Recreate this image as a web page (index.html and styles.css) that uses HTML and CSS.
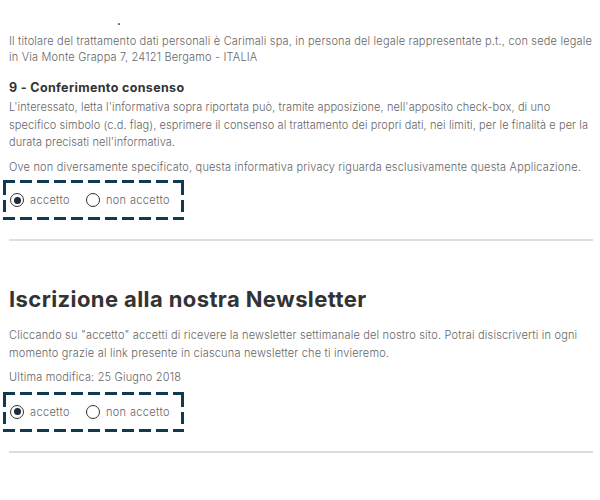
FILE: index.html
```html
<!DOCTYPE html>
<html lang="it">
<head>
<meta charset="utf-8">
<link rel="stylesheet" href="styles.css">
</head>
<body>
<div class="page">
  <div class="dot">.</div>
  <p class="txt first">Il titolare del trattamento dati personali è Carimali spa, in persona del legale rappresentate p.t., con sede legale in Via Monte Grappa 7, 24121 Bergamo - ITALIA</p>
  <h3 class="sub">9 - Conferimento consenso</h3>
  <p class="txt tight">L'interessato, letta l'informativa sopra riportata può, tramite apposizione, nell'apposito check-box, di uno specifico simbolo (c.d. flag), esprimere il consenso al trattamento dei propri dati, nei limiti, per le finalità e per la durata precisati nell'informativa.</p>
  <p class="txt">Ove non diversamente specificato, questa informativa privacy riguarda esclusivamente questa Applicazione.</p>
  <div class="choice">
    <label class="opt"><span class="radio on"></span>accetto</label>
    <label class="opt"><span class="radio"></span>non accetto</label>
  </div>
  <hr class="rule">
  <h2 class="title">Iscrizione alla nostra Newsletter</h2>
  <p class="txt intro">Cliccando su "accetto" accetti di ricevere la newsletter settimanale del nostro sito. Potrai disiscriverti in ogni momento grazie al link presente in ciascuna newsletter che ti invieremo.</p>
  <p class="txt">Ultima modifica: 25 Giugno 2018</p>
  <div class="choice second">
    <label class="opt"><span class="radio on"></span>accetto</label>
    <label class="opt"><span class="radio"></span>non accetto</label>
  </div>
  <hr class="rule">
</div>
</body>
</html>
```
FILE: styles.css
```css
html, body { margin: 0; padding: 0; background: #fff; }
body { font-family: Inter, "Open Sans", sans-serif; color: #666; }
.page { padding: 0 7px 0 9px; width: 584px; }
.dot { font-size: 14px; line-height: 16px; padding-left: 108px; padding-top: 12px; color: #222; height: 20.5px; }
.txt { font-size: 11px; line-height: 17.5px; margin: 0 0 7px 0; font-weight: 300; letter-spacing: 0.18px; }
.tight { letter-spacing: 0.1px; }
.first { line-height: 16.5px; margin-bottom: 13.5px; }
.sub { font-size: 12.5px; font-weight: 700; color: #333; margin: 0 0 2px 0; line-height: 18px; letter-spacing: 0.35px; }
.choice {
  display: inline-flex; align-items: center; gap: 16px;
  margin: -3px 0 0 -6px; padding: 0 14px 0 7px; height: 40px; box-sizing: border-box;
  background-image:
    repeating-linear-gradient(90deg, #0e3a52 0 12px, transparent 12px 17px),
    repeating-linear-gradient(90deg, #0e3a52 0 12px, transparent 12px 17px),
    repeating-linear-gradient(180deg, #0e3a52 0 12px, transparent 12px 17px),
    repeating-linear-gradient(180deg, #0e3a52 0 12px, transparent 12px 17px);
  background-size: 100% 3px, 100% 3px, 3px 100%, 3px 100%;
  background-position: 0 0, 0 100%, 0 3px, 100% 3px;
  background-repeat: no-repeat;
}
.choice.second { margin-top: -2px; }
.opt { display: flex; align-items: center; gap: 6px; font-size: 11px; font-weight: 300; color: #666; letter-spacing: 0.35px; }
.radio { width: 12px; height: 12px; border: 1.5px solid #333; border-radius: 50%; box-sizing: content-box; display: inline-block; position: relative; }
.radio.on::after { content: ""; position: absolute; left: 2.5px; top: 2.5px; width: 7px; height: 7px; border-radius: 50%; background: #1d2b3a; }
.rule { border: 0; border-top: 2px solid #ddd; margin: 19px 0 0 0; }
.title { font-size: 22px; font-weight: 700; color: #333; margin: 45px 0 15px 0; line-height: 26px; letter-spacing: 0.4px; }
```
